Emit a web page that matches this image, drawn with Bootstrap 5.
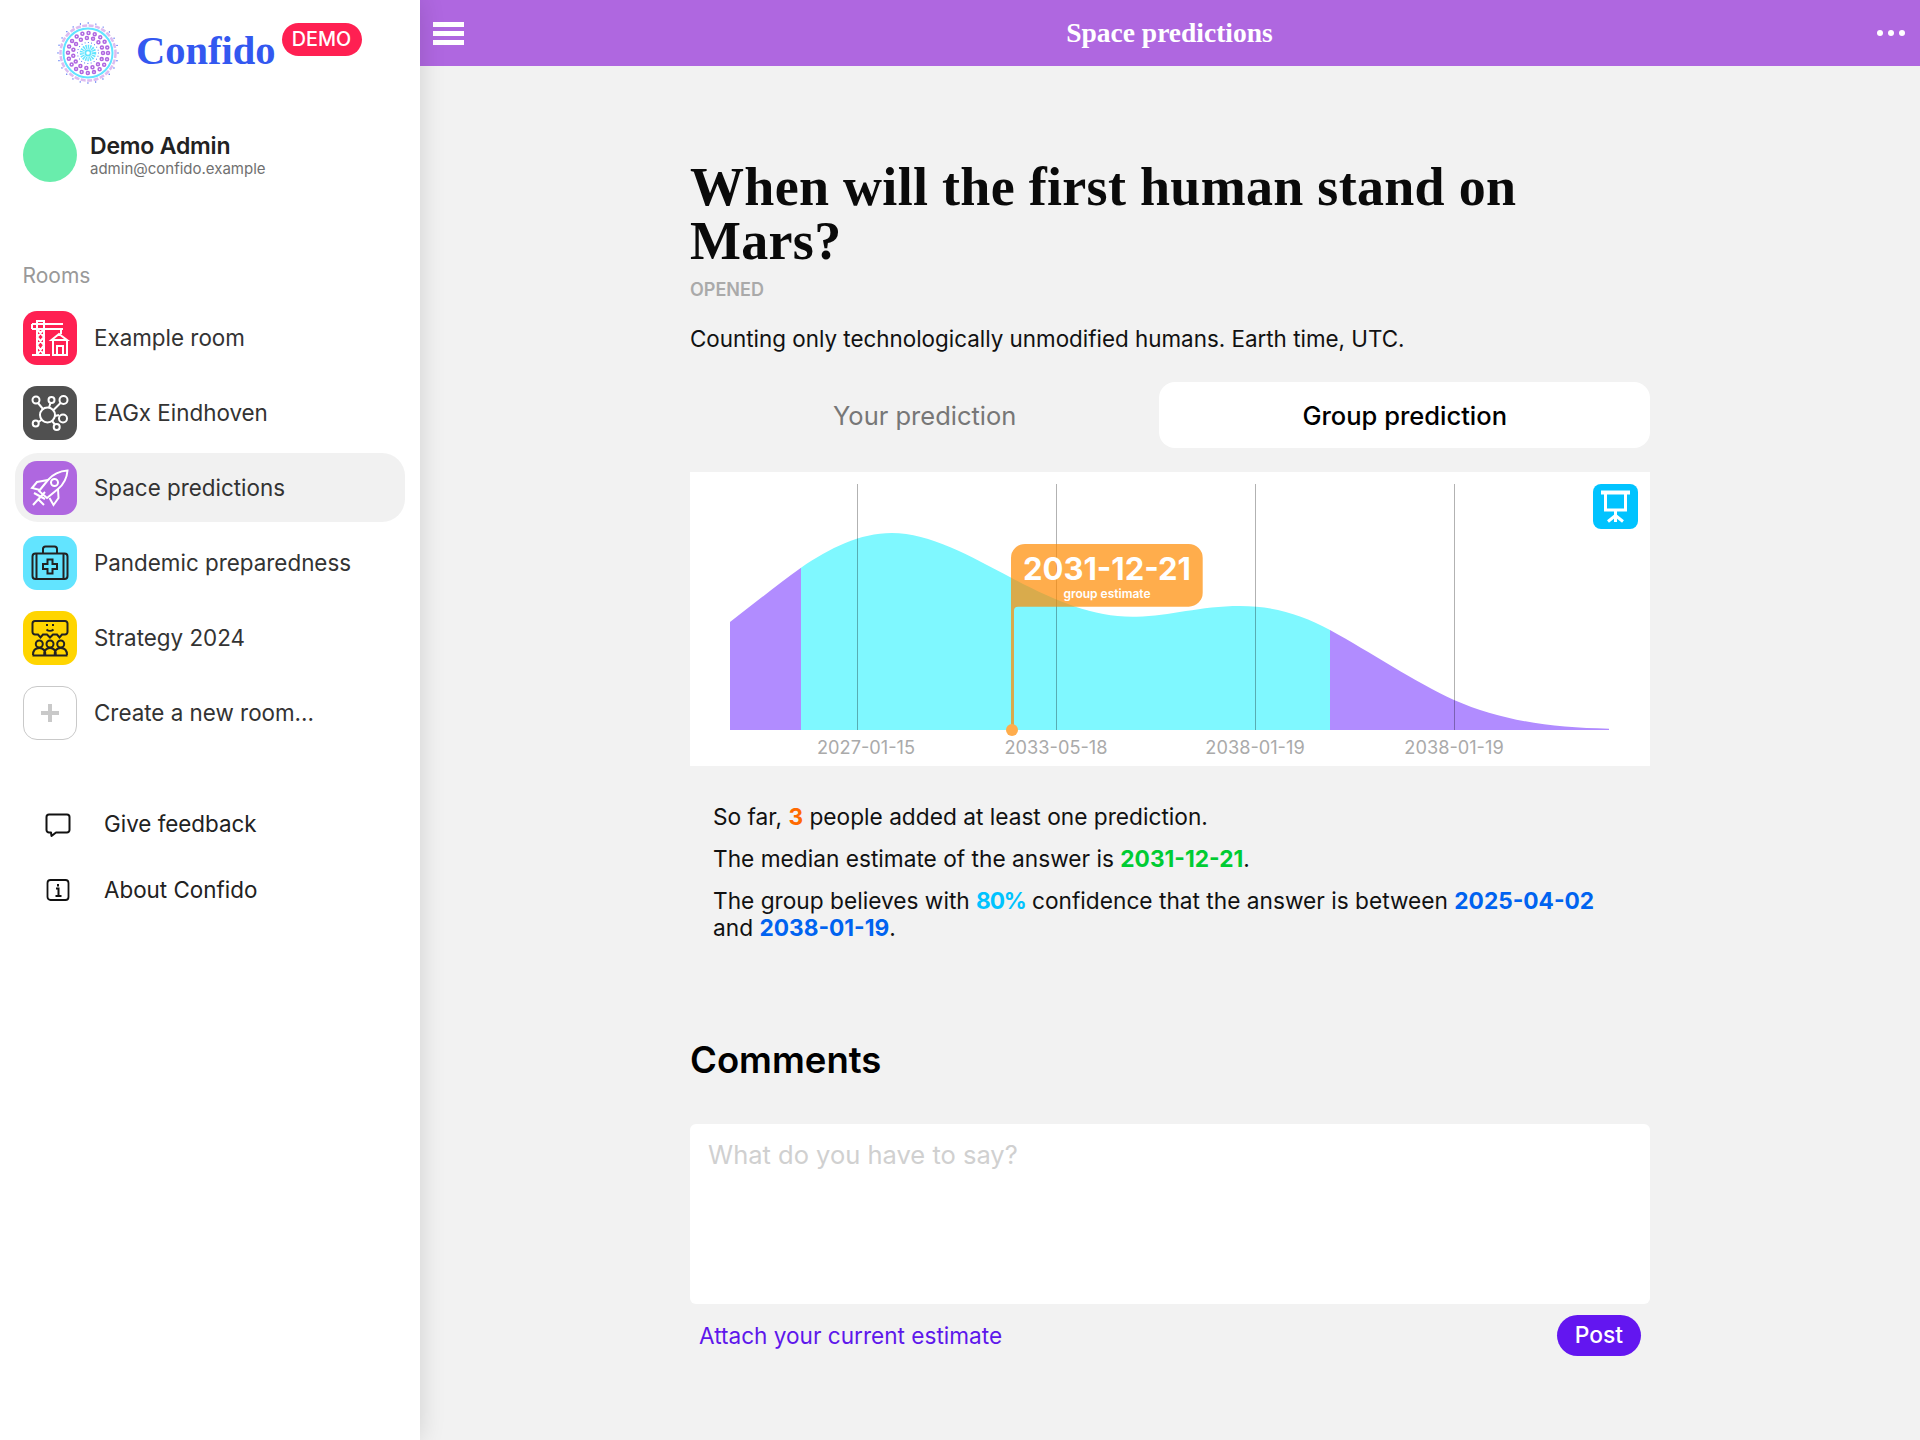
<!DOCTYPE html>
<html lang="en">

<head>
  <meta charset="UTF-8" />
  <meta name="viewport" content="width=device-width, initial-scale=1.0" />
  <title>Space predictions</title>
  <link href="https://cdn.jsdelivr.net/npm/bootstrap@5.3.3/dist/css/bootstrap.min.css" rel="stylesheet">
  <style>
    body { font-family: Inter, "Liberation Sans", sans-serif; background: #f2f2f2; color: #000; min-height: 1440px; }
    .serif-bold { font-family: "Liberation Serif", serif; font-weight: 700; }
    .side-panel { width: 420px; min-height: 1440px; background: #fff; box-shadow: 0 0 24px rgba(0,0,0,.14); position: relative; z-index: 2; flex-shrink: 0; }
    .brand-row { height: 100px; padding: 18px 0 0 57px; }
    .brand-logo { margin-top: 4px; }
    .brand-name { font-size: 40.5px; color: #3358f0; margin-left: 17px; line-height: 1; margin-top: 13px; }
    .demo-pill { background: #ff2052; color: #fff; font-size: 19.8px; font-weight: 500; border-radius: 17px; height: 33px; width: 80px; margin: 5px 0 0 6px; display: flex; align-items: center; justify-content: center; }
    .user-row { padding: 28px 23px 0; gap: 13px; height: 128px; align-items: flex-start; }
    .user-avatar { width: 54px; height: 54px; border-radius: 50%; background: #69edac; }
    .user-name { font-size: 23px; font-weight: 600; line-height: 27px; margin-top: 5px; color: #222; letter-spacing: -.2px; }
    .user-mail { font-size: 15px; line-height: 18px; color: #707070; }
    .rooms-label { font-size: 21px; color: #999; padding-left: 22.5px; margin-top: 35px; line-height: 26px; height: 40px; }
    .room-link { display: flex; align-items: center; height: 69px; margin: 0 15px; padding: 0 8px; gap: 17px; margin-bottom: 6px; border-radius: 23px; font-size: 22.4px; color: #333; }
    .room-link.active-room { background: #f1f1f1; }
    .room-icon { width: 54px; height: 54px; border-radius: 14px; flex-shrink: 0; display: block; }
    .plus-box { border: 1.5px solid #c9c9c9; }
    .extra-list { margin-top: 44px; }
    .extra-link { display: flex; align-items: center; height: 66px; padding-left: 43px; gap: 31px; font-size: 22.4px; color: #222; }
    .extra-link svg { width: 30px; height: 30px; flex-shrink: 0; }
    .main-area { flex: 1 1 auto; min-width: 0; }
    .top-bar { height: 66px; background: #af67e0; color: #fff; padding: 0 13px; }
    .top-title { font-size: 27.5px; line-height: 1; margin-left: -2px; }
    .burger { width: 31px; display: flex; flex-direction: column; gap: 4px; }
    .burger span { height: 5px; background: #fff; }
    .dots { display: flex; gap: 5px; margin-right: 2px; }
    .dots span { width: 6px; height: 6px; background: #fff; border-radius: 50%; }
    .page-col { width: 960px; margin: 0 auto; padding-top: 94px; }
    .question-title { font-size: 54px; line-height: 54px; margin: 0; color: #0a0a0a; letter-spacing: .3px; }
    .status-tag { font-size: 18px; font-weight: 600; color: #aaa; line-height: 20px; margin-top: 12px; text-transform: uppercase; }
    .question-desc { font-size: 22.4px; line-height: 28px; margin: 25px 0 0; color: #111; }
    .mode-tabs { margin-top: 29px; }
    .mode-tabs .nav-link { height: 66px; border-radius: 16px; font-size: 25.5px; color: #777; line-height: 43px; padding: 12px; }
    .mode-tabs .nav-link.active { background: #fff; color: #000; font-weight: 500; }
    .chart-box { position: relative; height: 294px; background: #fff; margin-top: 24px; }
    .chart-box svg.chart-svg { display: block; }
    .tick-label { font-size: 18.2px; fill: #aaa; font-family: Inter, sans-serif; }
    .flag-date { font-size: 31px; font-weight: 700; fill: #fff; font-family: Inter, sans-serif; }
    .flag-sub { font-size: 12px; font-weight: 600; fill: #fff; font-family: Inter, sans-serif; }
    .present-btn { position: absolute; top: 12px; right: 12px; width: 45px; height: 45px; border-radius: 8px; background: #00c3ff; }
    .stats-block { padding: 37px 23px 0; font-size: 22.7px; line-height: 27px; color: #111; }
    .stats-block p { margin: 0 0 15px; }
    .stats-block b { font-weight: 700; white-space: nowrap; }
    .num-orange { color: #ff6a00; }
    .num-green { color: #00cc33; }
    .num-cyan { color: #00c3ff; letter-spacing: -1.2px; }
    .num-blue { color: #0063f0; }
    .comments-head { font-size: 36.5px; font-weight: 600; line-height: 44px; margin: 97px 0 0; }
    .comment-input { height: 180px; margin-top: 42px; border: 0; border-radius: 6px; font-size: 25.5px; padding: 12px 18px; resize: none; }
    .comment-input::placeholder { color: #d0d0d0; }
    .comment-foot { padding: 11px 9px 0; }
    .attach-link { color: #5e17eb; font-size: 22.6px; text-decoration: none; margin-top: 1px; }
    .post-btn { background: #6316f0; border: 0; color: #fff; height: 41px; width: 84px; font-size: 22.8px; padding: 0; font-weight: 500; line-height: 1; }
  </style>
</head>

<body class="d-flex m-0">

  <!-- Sidebar -->
  <aside class="side-panel">
    <div class="brand-row d-flex align-items-start">
      <svg class="brand-logo flex-shrink-0" width="62" height="62" viewBox="0 0 62 62" fill="none">
        <circle cx="31" cy="31" r="27.5" stroke="#dcbcf0" stroke-width="2.5" stroke-dasharray="5 1.5"/>
        <circle cx="31" cy="31" r="30" stroke="#3358f0" stroke-width="1.3" stroke-linecap="round" stroke-dasharray="0 7.85"/>
        <circle cx="31" cy="31" r="24.5" stroke="#62e4ff" stroke-width="2"/>
        <circle cx="31" cy="31" r="20" stroke="#af67e0" stroke-width="4.5" stroke-linecap="round" stroke-dasharray="0 6.28"/>
        <circle cx="31" cy="31" r="20" stroke="#fff" stroke-width="1.4" stroke-linecap="round" stroke-dasharray="0 6.28"/>
        <circle cx="31" cy="31" r="15" stroke="#af67e0" stroke-width="4.5" stroke-linecap="round" stroke-dasharray="0 6.28"/>
        <circle cx="31" cy="31" r="15" stroke="#fff" stroke-width="1.4" stroke-linecap="round" stroke-dasharray="0 6.28"/>
        <circle cx="31" cy="31" r="10.5" fill="#fff" stroke="#3358f0" stroke-width="1" stroke-linecap="round" stroke-dasharray="0 3.3"/>
        <circle cx="31" cy="31" r="6" stroke="#62e4ff" stroke-width="4.5" stroke-dasharray="1.3 .8"/>
        <circle cx="31" cy="31" r="3.4" fill="#62e4ff"/>
        <circle cx="31" cy="31" r="1.8" fill="#fff"/>
      </svg>
      <span class="brand-name serif-bold">Confido</span>
      <span class="demo-pill">DEMO</span>
    </div>

    <div class="user-row d-flex">
      <div class="user-avatar flex-shrink-0"></div>
      <div>
        <div class="user-name">Demo Admin</div>
        <div class="user-mail">admin@confido.example</div>
      </div>
    </div>

    <div class="rooms-label">Rooms</div>

    <nav>
      <a class="room-link text-decoration-none" href="#">
        <svg class="room-icon" viewBox="0 0 54 54" fill="none" stroke="#fff" stroke-width="2"><rect width="54" height="54" fill="#ff2052" stroke="none"/>
          <path d="M14 44V10h7v34M9 44h18M9 13h31M9 18h31M9 13v5M14 18l7 8-7 8 7 10M21 18l-7 8 7 8-7 10M38 18v5M28.500 29l7.500-6 8 6zM30 29v15h14V29M34 44v-9h6v9"/>
        </svg>
        Example room
      </a>
      <a class="room-link text-decoration-none" href="#">
        <svg class="room-icon" viewBox="0 0 54 54" fill="none" stroke="#fff" stroke-width="2"><rect width="54" height="54" fill="#505050" stroke="none"/>
          <circle cx="24.500" cy="29" r="7.500"/><circle cx="13" cy="14" r="3.500"/><circle cx="28.500" cy="14" r="3"/><circle cx="40.500" cy="14" r="4"/><circle cx="40" cy="32.500" r="4"/><circle cx="33.700" cy="41" r="3"/><circle cx="12.700" cy="37.500" r="3"/>
          <path d="M15 17l5 6M27.500 17l-1.500 4.500M37.500 17l-7.500 7.500M32 30l4-1M29 35l3 3.500M15.500 36l3.500-2.500"/>
        </svg>
        EAGx Eindhoven
      </a>
      <a class="room-link active-room text-decoration-none" href="#">
        <svg class="room-icon" viewBox="0 0 54 54" fill="none" stroke="#fff" stroke-width="2"><rect width="54" height="54" fill="#af67e0" stroke="none"/>
          <path d="M44.500 9.500C37 10 30 13 25 19L16 30l8 7 11-9c6-5 9-12 9.500-18.500z"/><circle cx="31.500" cy="21.500" r="3.500"/>
          <path d="M25 19l-11 2-5 6 8 2M35 28l.5 9-5 7-4-7M10 44l12-13M15 38l6 6M11 32l11 6"/>
        </svg>
        Space predictions
      </a>
      <a class="room-link text-decoration-none" href="#">
        <svg class="room-icon" viewBox="0 0 54 54" fill="none" stroke="#222" stroke-width="2"><rect width="54" height="54" fill="#62e4ff" stroke="none"/>
          <rect x="9.500" y="17.500" width="35" height="25.500" rx="3"/><path d="M13.500 17.500V43M40.500 17.500V43M20 17.500V13a2.500 2.500 0 0 1 2.500-2.500h9A2.500 2.500 0 0 1 34 13v4.500"/>
          <path d="M24.500 23.500h5v4.500H34v5h-4.500v4.500h-5V33H20v-5h4.500z"/>
        </svg>
        Pandemic preparedness
      </a>
      <a class="room-link text-decoration-none" href="#">
        <svg class="room-icon" viewBox="0 0 54 54" fill="none" stroke="#222" stroke-width="2"><rect width="54" height="54" fill="#ffd500" stroke="none"/>
          <path d="M12 10h30a2.500 2.500 0 0 1 2.500 2.500V21a2.500 2.500 0 0 1-2.500 2.500h-3l-2.500 3-2.500-3h-4l-3 3-3-3h-4l-2.500 3-2.500-3h-3A2.500 2.500 0 0 1 9.500 21v-8.500A2.500 2.500 0 0 1 12 10z"/>
          <path d="M24 13v2M30 13v2M23.500 18.500c2 1.800 5 1.800 7 0"/>
          <circle cx="16.300" cy="33" r="3.500"/><circle cx="27" cy="33" r="3.500"/><circle cx="37.700" cy="33" r="3.500"/>
          <path d="M9.500 44.500h35M10 44c0-4.500 2.500-7 6.300-7s6 2.500 6 7M21.200 44c0-4.500 2-7 5.800-7s5.800 2.500 5.800 7M31.700 44c0-4.500 2.200-7 6-7s6.300 2.500 6.300 7"/>
        </svg>
        Strategy 2024
      </a>
      <a class="room-link text-decoration-none" href="#">
        <span class="room-icon plus-box d-flex align-items-center justify-content-center">
          <svg width="20" height="20" viewBox="0 0 20 20"><path d="M1 10h18M10 1v18" stroke="#c9c9c9" stroke-width="4"/></svg>
        </span>
        Create a new room...
      </a>
    </nav>

    <div class="extra-list">
      <a class="extra-link text-decoration-none" href="#">
        <svg viewBox="0 0 30 30" fill="none" stroke="#111" stroke-width="2" stroke-linejoin="round"><path d="M6 5.500h18a2.500 2.500 0 0 1 2.500 2.500v13a2.500 2.500 0 0 1-2.500 2.500H13L8.500 27 8 23.500H6A2.500 2.500 0 0 1 3.500 21V8A2.500 2.500 0 0 1 6 5.500z"/></svg>
        Give feedback
      </a>
      <a class="extra-link text-decoration-none" href="#">
        <svg viewBox="0 0 30 30" fill="none" stroke="#111"><rect x="4.500" y="5" width="21" height="20" rx="3" stroke-width="1.800"/><path d="M13 13.500h2.500V21M12.500 21h6M15 9v2.500" stroke-width="2"/></svg>
        About Confido
      </a>
    </div>
  </aside>

  <!-- Main -->
  <div class="main-area">
    <header class="top-bar d-flex align-items-center justify-content-between">
      <div class="burger"><span></span><span></span><span></span></div>
      <div class="top-title serif-bold">Space predictions</div>
      <div class="dots"><span></span><span></span><span></span></div>
    </header>

    <main class="page-col">
      <h1 class="question-title serif-bold">When will the first human stand on Mars?</h1>
      <div class="status-tag">Opened</div>
      <p class="question-desc">Counting only technologically unmodified humans. Earth time, UTC.</p>

      <ul class="nav nav-fill mode-tabs">
        <li class="nav-item"><a class="nav-link" href="#">Your prediction</a></li>
        <li class="nav-item"><a class="nav-link active" href="#">Group prediction</a></li>
      </ul>

      <div class="chart-box">
        <svg class="chart-svg" width="960" height="294" viewBox="0 0 960 294">
          <path d="M40 258V150C65 131 88 112 111 95.700V258Z" fill="#b18cff"/>
          <path d="M111 258V95.700C140 76 170 61 201.700 61C240 61 280 84 321.700 106C365 129 405 146 446.700 144.700C480 144 510 134 550 134C585 134 612 143 640 158V258Z" fill="#7ff8ff"/>
          <path d="M640 258V158C680 180 725 210 764 228C810 248 860 256 919 256.700V258Z" fill="#b18cff"/>
          <g stroke="#000" stroke-opacity=".3" stroke-width="1">
            <path d="M167.500 12V258M366.500 12V258M565.500 12V258M764.500 12V258"/>
          </g>
          <path d="M321 258V86a14 14 0 0 1 14-14H498.700a14 14 0 0 1 14 14V120.700a14 14 0 0 1-14 14H328a4 4 0 0 0-4 4V258Z" fill="#ff8a00" fill-opacity=".7"/>
          <circle cx="322" cy="258" r="6" fill="#ffad4c"/>
          <text class="flag-date" x="417" y="108" text-anchor="middle">2031-12-21</text>
          <text class="flag-sub" x="417" y="126" text-anchor="middle">group estimate</text>
          <text class="tick-label" x="176" y="282" text-anchor="middle">2027-01-15</text>
          <text class="tick-label" x="366" y="282" text-anchor="middle">2033-05-18</text>
          <text class="tick-label" x="565" y="282" text-anchor="middle">2038-01-19</text>
          <text class="tick-label" x="764" y="282" text-anchor="middle">2038-01-19</text>
        </svg>
        <div class="present-btn">
          <svg width="45" height="45" viewBox="0 0 45 45" fill="none" stroke="#fff" stroke-width="3"><path d="M8 8.500h29" stroke-width="4"/><path d="M12.500 10v16h20V10M22.500 26v12M15 37.500l7.500-6 7.500 6"/></svg>
        </div>
      </div>

      <div class="stats-block">
        <p>So far, <b class="num-orange">3</b> people added at least one prediction.</p>
        <p>The median estimate of the answer is <b class="num-green">2031-12-21</b>.</p>
        <p>The group believes with <b class="num-cyan">80%</b> confidence that the answer is between <b class="num-blue">2025-04-02</b> and <b class="num-blue">2038-01-19</b>.</p>
      </div>

      <h2 class="comments-head">Comments</h2>
      <textarea class="form-control comment-input" placeholder="What do you have to say?"></textarea>
      <div class="comment-foot d-flex justify-content-between align-items-center">
        <a class="attach-link" href="#">Attach your current estimate</a>
        <button class="btn post-btn rounded-pill">Post</button>
      </div>
    </main>
  </div>

  <script src="https://cdn.jsdelivr.net/npm/bootstrap@5.3.3/dist/js/bootstrap.bundle.min.js"></script>
</body>

</html>
